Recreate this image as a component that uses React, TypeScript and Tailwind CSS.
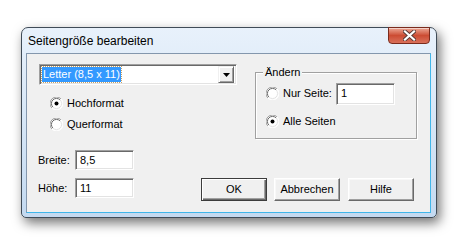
import React from 'react';

const font = { fontFamily: '"Liberation Sans", Arial, sans-serif' };

function Radio({ checked }: { checked?: boolean }) {
  return (
    <svg width="13" height="13" viewBox="0 0 13 13" className="shrink-0">
      <circle cx="6.5" cy="6.5" r="6" fill="#ffffff" />
      <path d="M1.9 11.1 A6 6 0 0 1 11.1 1.9" fill="none" stroke="#a0a0a0" strokeWidth="1" />
      <path d="M2.9 10.1 A4.8 4.8 0 0 1 10.1 2.9" fill="none" stroke="#696969" strokeWidth="1" />
      <path d="M11.1 1.9 A6 6 0 0 1 1.9 11.1" fill="none" stroke="#ffffff" strokeWidth="1" />
      <path d="M10.1 2.9 A4.8 4.8 0 0 1 2.9 10.1" fill="none" stroke="#e3e3e3" strokeWidth="1" />
      {checked && <circle cx="6.5" cy="6.5" r="2" fill="#000000" />}
    </svg>
  );
}

function Field({ value, w, h }: { value: string; w: string; h: string }) {
  return (
    <div className={`${w} ${h} bg-white border border-t-[#a0a0a0] border-l-[#a0a0a0] border-r-white border-b-white shadow-[inset_1px_1px_0_#696969,inset_-1px_-1px_0_#e3e3e3] flex items-center pl-[4px] text-[11px] text-black`}>
      {value}
    </div>
  );
}

function Button({ label, isDefault }: { label: string; isDefault?: boolean }) {
  return (
    <div
      className={`w-[66px] h-[23px] flex items-center justify-center bg-[#f0f0f0] text-[11px] text-black border ${
        isDefault
          ? 'border-[#3c3c3c] shadow-[inset_1px_1px_0_#ffffff,inset_-1px_-1px_0_#696969,inset_-2px_-2px_0_#a0a0a0]'
          : 'border-t-white border-l-white border-r-[#696969] border-b-[#696969] shadow-[inset_-1px_-1px_0_#a0a0a0,inset_1px_1px_0_#f8f8f8]'
      }`}
    >
      {label}
    </div>
  );
}

export default function App() {
  return (
    <div className="w-[473px] h-[251px] bg-white overflow-hidden pl-[21px] pt-[27px]" style={font}>
      <div className="relative w-[416px] h-[191px] rounded-t-[7px] rounded-b-[5px] border border-[#3f4b57] bg-gradient-to-b from-[#e8f1fb] via-[#d6e6f6] to-[#c4daf1] shadow-[3px_5px_12px_rgba(0,0,0,0.55)] pt-[25px] pl-[4px] pr-[5px] pb-[4px]">
        {/* title */}
        <div className="absolute left-[6px] top-[5px] text-[12px] text-black leading-[16px]">
          Seitengröße bearbeiten
        </div>
        {/* close button */}
        <div className="absolute right-[6px] top-[-1px] w-[42px] h-[17px] rounded-b-[4px] border border-[#7a2b1d] bg-gradient-to-b from-[#eba795] via-[#cc4c33] to-[#d9705a] shadow-[inset_0_1px_0_rgba(255,255,255,0.5)] flex items-center justify-center">
          <svg width="13" height="11" viewBox="0 0 13 11">
            <path d="M2 1.5 L11 9.5 M11 1.5 L2 9.5" stroke="#5a3a36" strokeWidth="4" strokeLinecap="square" />
            <path d="M2 1.5 L11 9.5 M11 1.5 L2 9.5" stroke="#ffffff" strokeWidth="2.2" strokeLinecap="square" />
          </svg>
        </div>

        {/* client */}
        <div className="w-[405px] h-[160px] border border-[#8497ad] border-b-[#3fb6ea] border-r-[#3fb6ea] bg-[#f0f0f0] pt-[10px] text-black text-[11px]">
          {/* top row */}
          <div className="flex items-start h-[74px]">
            <div className="ml-[12px] w-[198px]">
              {/* combo */}
              <div className="h-[21px] bg-white border border-t-[#a0a0a0] border-l-[#a0a0a0] border-r-white border-b-white shadow-[inset_1px_1px_0_#696969,inset_-1px_-1px_0_#e3e3e3] flex items-center pl-[2px] pr-[2px]">
                <div className="flex-1 flex items-center">
                  <span className="bg-[#3399ff] text-white leading-[15px] px-[1px] outline outline-1 outline-dotted outline-[#c8a060]">
                    Letter (8,5 x 11)
                  </span>
                </div>
                <div className="w-[16px] h-[17px] bg-[#f0f0f0] border border-t-[#f0f0f0] border-l-[#f0f0f0] border-r-[#696969] border-b-[#696969] shadow-[inset_1px_1px_0_#ffffff,inset_-1px_-1px_0_#a0a0a0] flex items-center justify-center">
                  <svg width="7" height="4" viewBox="0 0 7 4">
                    <path d="M0 0 H7 L3.5 4 Z" fill="#000000" />
                  </svg>
                </div>
              </div>
              <div className="ml-[11px] mt-[10px] flex flex-col gap-[5px]">
                <div className="flex items-center h-[16px] gap-[4px]">
                  <Radio checked />
                  <span>Hochformat</span>
                </div>
                <div className="flex items-center h-[16px] gap-[4px]">
                  <Radio />
                  <span>Querformat</span>
                </div>
              </div>
            </div>

            {/* group box */}
            <div className="relative ml-[18px] mt-[8px] w-[162px] h-[67px] border border-[#a0a0a0] shadow-[1px_1px_0_#ffffff,inset_1px_1px_0_#ffffff] pt-[10px] pl-[10px]">
              <span className="absolute left-[7px] top-[-8px] bg-[#f0f0f0] px-[2px] leading-[14px]">Ändern</span>
              <div className="flex items-center h-[21px]">
                <Radio />
                <span className="ml-[4px] w-[53px]">Nur Seite:</span>
                <Field value="1" w="w-[59px]" h="h-[22px]" />
              </div>
              <div className="flex items-center h-[16px] mt-[9px] gap-[4px]">
                <Radio checked />
                <span>Alle Seiten</span>
              </div>
            </div>
          </div>

          {/* bottom row */}
          <div className="flex items-start mt-[12px]">
            <div className="ml-[11px] flex flex-col gap-[8px]">
              <div className="flex items-center">
                <span className="w-[37px]">Breite:</span>
                <Field value="8,5" w="w-[59px]" h="h-[20px]" />
              </div>
              <div className="flex items-center">
                <span className="w-[37px]">Höhe:</span>
                <Field value="11" w="w-[59px]" h="h-[20px]" />
              </div>
            </div>
            <div className="ml-[67px] mt-[28px] flex">
              <Button label="OK" isDefault />
              <div className="ml-[7px]">
                <Button label="Abbrechen" />
              </div>
              <div className="ml-[8px]">
                <Button label="Hilfe" />
              </div>
            </div>
          </div>
        </div>
      </div>
    </div>
  );
}
